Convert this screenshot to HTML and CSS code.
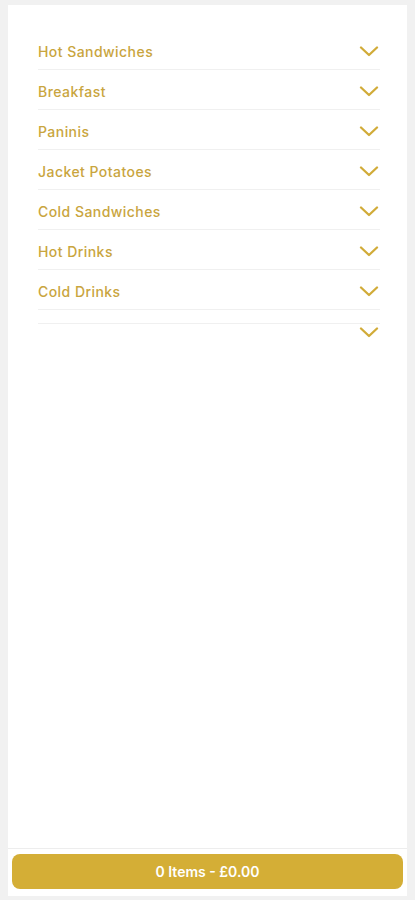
FILE: index.html
```html
<!DOCTYPE html>
<html>
<head>
    <title>Menu</title>
    <link rel="stylesheet" href="styles.css">
</head>
<body>
    <div class="card">
        <div class="menu">
            <div class="item"><span class="item-title">Hot Sandwiches</span><svg class="chev" viewBox="0 0 20 11"><path d="M2 1.5 L10 9 L18 1.5"/></svg></div>
            <div class="item"><span class="item-title">Breakfast</span><svg class="chev" viewBox="0 0 20 11"><path d="M2 1.5 L10 9 L18 1.5"/></svg></div>
            <div class="item"><span class="item-title">Paninis</span><svg class="chev" viewBox="0 0 20 11"><path d="M2 1.5 L10 9 L18 1.5"/></svg></div>
            <div class="item"><span class="item-title">Jacket Potatoes</span><svg class="chev" viewBox="0 0 20 11"><path d="M2 1.5 L10 9 L18 1.5"/></svg></div>
            <div class="item"><span class="item-title">Cold Sandwiches</span><svg class="chev" viewBox="0 0 20 11"><path d="M2 1.5 L10 9 L18 1.5"/></svg></div>
            <div class="item"><span class="item-title">Hot Drinks</span><svg class="chev" viewBox="0 0 20 11"><path d="M2 1.5 L10 9 L18 1.5"/></svg></div>
            <div class="item"><span class="item-title">Cold Drinks</span><svg class="chev" viewBox="0 0 20 11"><path d="M2 1.5 L10 9 L18 1.5"/></svg></div>
            <div class="item item-empty"><span class="item-title"></span><svg class="chev" viewBox="0 0 20 11"><path d="M2 1.5 L10 9 L18 1.5"/></svg></div>
        </div>
        <div class="footer">
            <button class="basket">0 Items - £0.00</button>
        </div>
    </div>
</body>
</html>
```
FILE: styles.css
```css
* {
    margin: 0;
    padding: 0;
    box-sizing: border-box;
}
body {
    background: #f1f1f1;
    padding: 5px 8px 4px;
    font-family: "Inter", "Open Sans", sans-serif;
}
.card {
    background: #fff;
    height: calc(100vh - 9px);
    display: flex;
    flex-direction: column;
}
.menu {
    flex: 1;
    padding: 25px 27px 0 30px;
}
.item {
    height: 40px;
    border-bottom: 1px solid #f0f0f0;
    display: flex;
    align-items: center;
    justify-content: space-between;
    padding-top: 4px;
}
.item-title {
    color: #c9a53e;
    font-size: 14px;
    font-weight: 500;
    letter-spacing: 0.45px;
}
.chev {
    width: 20px;
    height: 11px;
    margin-right: 1px;
}
.chev path {
    fill: none;
    stroke: #d1ab38;
    stroke-width: 2.3;
    stroke-linecap: round;
    stroke-linejoin: round;
}
.item-empty {
    margin-top: 13px;
    border-top: 1px solid #f0f0f0;
    border-bottom: none;
    height: 15px;
    padding-top: 2px;
}
.footer {
    border-top: 1px solid #ededed;
    padding: 5px 4px 7px;
}
.basket {
    width: 100%;
    height: 35px;
    border: none;
    border-radius: 8px;
    background: #d4ae36;
    color: #fff;
    font-family: "Inter", "Open Sans", sans-serif;
    font-size: 14px;
    font-weight: 600;
    cursor: pointer;
}
```
